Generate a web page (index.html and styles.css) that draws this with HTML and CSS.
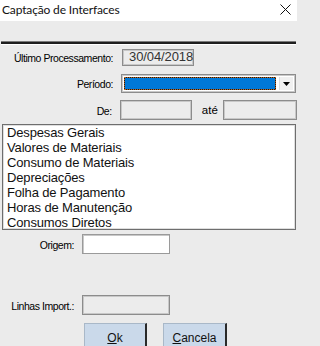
FILE: index.html
```html
<!DOCTYPE html>
<html lang="pt">
<head>
<meta charset="utf-8">
<title>Captação de Interfaces</title>
<link rel="stylesheet" href="styles.css">
</head>
<body>
<div class="window">
  <div class="titlebar">
    <span class="title">Captação de Interfaces</span>
    <svg class="close" width="11" height="11" viewBox="0 0 11 11"><path d="M0.5 0.5 L10.5 10.5 M10.5 0.5 L0.5 10.5" stroke="#111" stroke-width="1" fill="none"/></svg>
  </div>
  <div class="client">
    <div class="sep"></div>
    <div class="row r1">
      <span class="lbl">Último Processamento:</span>
      <div class="box disabled date">30/04/2018</div>
    </div>
    <div class="row r2">
      <span class="lbl">Período:</span>
      <div class="combo">
        <div class="combo-sel"><div class="combo-fill"></div></div>
        <div class="combo-btn"><svg width="7" height="4" viewBox="0 0 7 4"><path d="M0 0 H7 L3.5 4 Z" fill="#000"/></svg></div>
      </div>
    </div>
    <div class="row r3">
      <span class="lbl">De:</span>
      <div class="box disabled de"></div>
      <span class="ate">até</span>
      <div class="box disabled ate-box"></div>
    </div>
    <ul class="list">
      <li>Despesas Gerais</li>
      <li>Valores de Materiais</li>
      <li>Consumo de Materiais</li>
      <li>Depreciações</li>
      <li>Folha de Pagamento</li>
      <li>Horas de Manutenção</li>
      <li>Consumos Diretos</li>
    </ul>
    <div class="row r4">
      <span class="lbl2">Origem:</span>
      <div class="box white small"></div>
    </div>
    <div class="row r5">
      <span class="lbl2">Linhas Import.:</span>
      <div class="box disabled small"></div>
    </div>
    <div class="buttons">
      <button class="btn ok"><u>O</u>k</button>
      <button class="btn cancel"><u>C</u>ancela</button>
    </div>
  </div>
</div>
</body>
</html>
```

FILE: styles.css
```css
html, body {
  margin: 0;
  padding: 0;
  background: #ebebeb;
  overflow: hidden;
}
.window {
  width: 297px;
  height: 346px;
  font-family: "Liberation Sans", Arial, sans-serif;
  color: #000;
  overflow: hidden;
}
.titlebar {
  height: 21px;
  background: #ffffff;
  display: flex;
  align-items: center;
  justify-content: space-between;
  padding: 0 5px 0 2px;
}
.title {
  font-family: Lato, "Noto Sans", sans-serif;
  font-size: 12px;
  letter-spacing: -0.15px;
  color: #111;
  margin-top: -2px;
}
.close {
  margin-top: -3px;
  margin-right: 1px;
}
.client {
  background: #ebebeb;
  height: 325px;
}
.sep {
  margin: 20px 1px 0 1px;
  border-top: 1px solid #7a7a7a;
  border-bottom: 1px solid #ffffff;
  background: #1e1e1e;
  height: 2px;
}
.row {
  display: flex;
  align-items: center;
}
.lbl {
  width: 113px;
  text-align: right;
  font-size: 10.5px;
  margin-right: 8px;
  letter-spacing: -0.45px;
  padding-top: 1px;
}
.lbl2 {
  width: 74px;
  text-align: right;
  font-size: 10.5px;
  margin-right: 8px;
  letter-spacing: -0.45px;
  padding-top: 1px;
}
.box {
  box-sizing: border-box;
  border: 1px solid #8c8c8c;
  box-shadow: inset 0 0 0 1px #c8c8c8;
  height: 20px;
}
.disabled {
  background: #ececec;
}
.white {
  background: #ffffff;
  border-color: #9a9a9a;
  box-shadow: inset 1px 1px 0 #c8c8c8;
}
.r1 {
  margin-top: 4px;
}
.date {
  margin-left: 1px;
  width: 72px;
  height: 17px;
  font-size: 13px;
  color: #333;
  line-height: 14px;
  padding-left: 6px;
  letter-spacing: -0.1px;
}
.r2 {
  margin-top: 8px;
}
.combo {
  box-sizing: border-box;
  width: 175px;
  height: 19px;
  border: 1px solid #8c8c8c;
  box-shadow: inset 0 0 0 1px #c8c8c8;
  background: #fff;
  display: flex;
  padding: 2px;
}
.combo-sel {
  flex: 1;
  border: 1px dotted #b4621e;
  background: #1a1a1a;
  margin-right: 3px;
}
.combo-fill {
  height: 100%;
  background: #0078d7;
}
.combo-btn {
  width: 13px;
  background: #f0f0f0;
  border-left: 1px solid #dcdcdc;
  display: flex;
  align-items: center;
  justify-content: center;
}
.r3 {
  margin-top: 7px;
}
.de {
  width: 73px;
}
.ate {
  font-size: 11.5px;
  margin-left: 10px;
  margin-right: 5px;
}
.ate-box {
  width: 75px;
}
.list {
  list-style: none;
  box-sizing: border-box;
  margin: 4px 1px 0 2px;
  padding: 0 0 0 4px;
  height: 106px;
  background: #ffffff;
  border: 1px solid #6e6e6e;
  box-shadow: inset 0 0 0 1px #dedede;
  font-size: 13px;
  line-height: 15px;
  color: #111;
  overflow: hidden;
}
.list li {
  margin: 0;
  letter-spacing: -0.15px;
}
.r4 {
  margin-top: 4px;
}
.small {
  width: 88px;
}
.r5 {
  margin-top: 41px;
}
.buttons {
  display: flex;
  margin-top: 8px;
  padding-left: 84px;
  gap: 16px;
}
.btn {
  box-sizing: border-box;
  width: 63px;
  height: 28px;
  background: #cad9ea;
  border: 1px solid #a9b8c8;
  border-right: 2px solid #2a2a2a;
  border-bottom: 2px solid #2a2a2a;
  font-family: "Liberation Sans", Arial, sans-serif;
  font-size: 12px;
  color: #111;
  padding: 0;
  padding-top: 2px;
}
.cancel {
  width: 64px;
}
```
